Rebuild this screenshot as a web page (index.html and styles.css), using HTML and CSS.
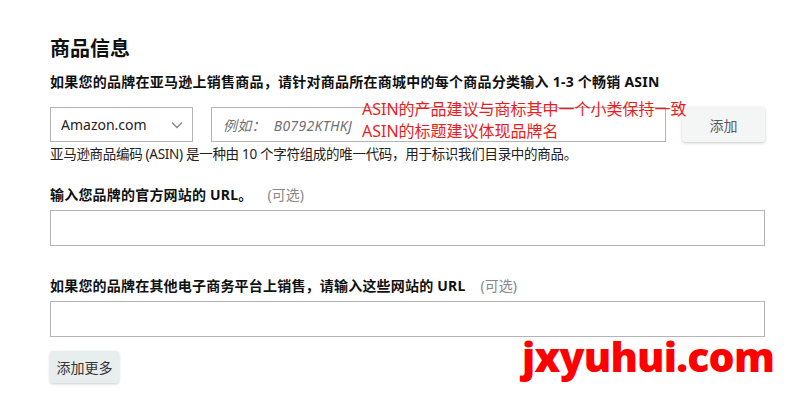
FILE: index.html
```html
<!DOCTYPE html>
<html lang="zh-CN">
<head>
<meta charset="utf-8">
<link rel="stylesheet" href="styles.css">
</head>
<body>
<div class="page">
  <h1 class="title">商品信息</h1>
  <p class="lead">如果您的品牌在亚马逊上销售商品，请针对商品所在商城中的每个商品分类输入 1-3 个畅销 ASIN</p>
  <div class="asin-row">
    <div class="select">
      <span>Amazon.com</span>
      <svg class="chev" width="12" height="8" viewBox="0 0 12 8"><polyline points="1,1.5 6,6.5 11,1.5" fill="none" stroke="#8a8a8a" stroke-width="1.4"/></svg>
    </div>
    <div class="field asin"><span class="ph">例如：&nbsp; B0792KTHKJ</span></div>
    <div class="btn add">添加</div>
    <div class="note">ASIN的产品建议与商标其中一个小类保持一致<br>ASIN的标题建议体现品牌名</div>
  </div>
  <p class="help">亚马逊商品编码 (ASIN) 是一种由 10 个字符组成的唯一代码，用于标识我们目录中的商品。</p>
  <p class="label first">输入您品牌的官方网站的 URL。<span class="opt">(可选)</span></p>
  <div class="field wide"></div>
  <p class="label second">如果您的品牌在其他电子商务平台上销售，请输入这些网站的 URL<span class="opt">(可选)</span></p>
  <div class="field wide"></div>
  <div class="btn more">添加更多</div>
  <div class="mark">jxyuhui.com</div>
</div>
</body>
</html>
```
FILE: styles.css
```css
* { box-sizing: border-box; }
html, body { margin: 0; background: #fff; }
body {
  font-family: "Noto Sans", "Noto Sans CJK SC", sans-serif;
  color: #0f1111;
  width: 788px;
  height: 399px;
  overflow: hidden;
}
.page {
  position: relative;
  padding: 34px 0 0 50px;
  width: 765px;
  height: 399px;
}
.title {
  margin: 0;
  font-size: 20px;
  line-height: 28px;
  font-weight: 700;
  font-family: "Noto Sans CJK SC", sans-serif;
}
.lead {
  margin: 10px 0 0;
  font-size: 14px;
  line-height: 20px;
  font-weight: 700;
  letter-spacing: 0.25px;
}
.asin-row {
  position: relative;
  margin-top: 15px;
  display: flex;
  align-items: flex-start;
}
.select {
  width: 143px;
  height: 35px;
  border: 1px solid #b4b4b4;
  display: flex;
  align-items: center;
  justify-content: space-between;
  padding: 0 9px 0 10px;
  font-size: 14px;
  color: #222;
}
.field {
  border: 1px solid #b4b4b4;
  background: #fff;
}
.asin {
  margin-left: 18px;
  width: 455px;
  height: 35px;
  display: flex;
  align-items: center;
  padding-left: 11px;
}
.ph {
  font-style: italic;
  color: #707070;
  font-size: 14px;
  letter-spacing: 0.3px;
}
.btn {
  display: flex;
  align-items: center;
  justify-content: center;
  border-radius: 3px;
  font-size: 14px;
}
.add {
  margin-left: 16px;
  width: 83px;
  height: 35px;
  background: #f4f6f6;
  color: #5a5a5a;
  box-shadow: 0 1px 3px rgba(0,0,0,0.22);
}
.note {
  position: absolute;
  left: 312px;
  top: -9px;
  color: #ec1c1c;
  font-size: 16px;
  line-height: 22px;
  font-family: "Noto Sans", "Noto Sans CJK SC", sans-serif;
}
.help {
  margin: 2px 0 0;
  font-size: 13.5px;
  line-height: 20px;
  color: #222;
  letter-spacing: -0.3px;
}
.label {
  margin: 0;
  font-size: 14px;
  line-height: 20px;
  font-weight: 700;
  letter-spacing: 0.2px;
}
.label.first { margin-top: 21px; }
.label.second { margin-top: 30px; }
.opt {
  font-weight: 400;
  color: #888;
  margin-left: 15px;
  letter-spacing: 0;
}
.wide {
  margin-top: 5px;
  width: 715px;
  height: 36px;
}
.more {
  margin-top: 14px;
  width: 69px;
  height: 32px;
  background: #e8eded;
  color: #333;
  box-shadow: 0 1px 3px rgba(0,0,0,0.2);
}
.mark {
  position: absolute;
  left: 522px;
  top: 331px;
  font-family: "Open Sans", "Noto Sans", sans-serif;
  font-weight: 800;
  font-size: 41px;
  line-height: 50px;
  color: #ff0000;
  letter-spacing: -0.8px;
}
```
